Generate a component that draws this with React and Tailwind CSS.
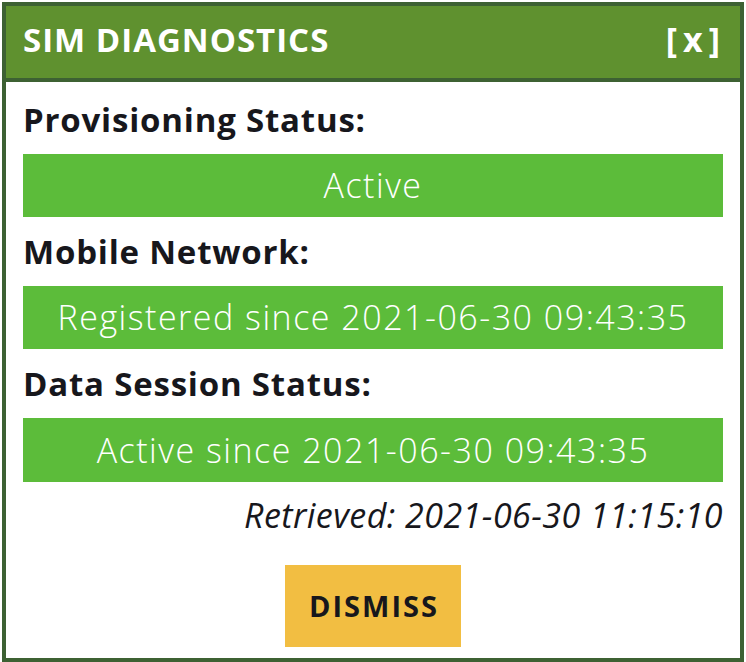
export default function App() {
  const font = "font-['Open_Sans',sans-serif]";
  return (
    <div className={`min-h-[662px] w-[746px] bg-white ${font}`}>
      <div className="ml-[2px] pt-[2px]">
        <div className="flex h-[660px] w-[742px] flex-col border-4 border-[#3d6133] bg-white">
          <div className="flex h-[76px] shrink-0 items-center justify-between border-b-4 border-[#3d6133] bg-[#5f912f] pb-[6px] pl-[17px] pr-[14px]">
            <span className="text-[33px] font-bold leading-none tracking-[1px] text-white">SIM DIAGNOSTICS</span>
            <span className="text-[34px] font-bold leading-none tracking-[6px] text-white">[x]</span>
          </div>
          <div className="flex flex-col px-[17px] pt-[3px]">
            <div className="flex h-[69px] items-center text-[33px] font-bold tracking-[0.8px] text-[#17171c]">Provisioning Status:</div>
            <div className="flex h-[63px] items-center justify-center bg-[#5cbc3a] text-[34px] font-light tracking-[1.5px] text-white">Active</div>
            <div className="flex h-[69px] items-center text-[33px] font-bold tracking-[0.8px] text-[#17171c]">Mobile Network:</div>
            <div className="flex h-[63px] items-center justify-center bg-[#5cbc3a] text-[34px] font-light tracking-[1.5px] text-white">Registered since 2021-06-30 09:43:35</div>
            <div className="flex h-[69px] items-center text-[33px] font-bold tracking-[0.8px] text-[#17171c]">Data Session Status:</div>
            <div className="flex h-[64px] items-center justify-center bg-[#5cbc3a] text-[34px] font-light tracking-[1.5px] text-white">Active since 2021-06-30 09:43:35</div>
            <div className="flex h-[66px] items-center justify-end text-[34px] italic tracking-[0.45px] text-[#17171c]">Retrieved: 2021-06-30 11:15:10</div>
            <div className="mt-[17px] flex justify-center">
              <button className="flex h-[82px] w-[176px] items-center justify-center bg-[#f2be42] pl-[2px] text-[29px] font-bold tracking-[2px] text-[#17171c]">DISMISS</button>
            </div>
          </div>
        </div>
      </div>
    </div>
  );
}
